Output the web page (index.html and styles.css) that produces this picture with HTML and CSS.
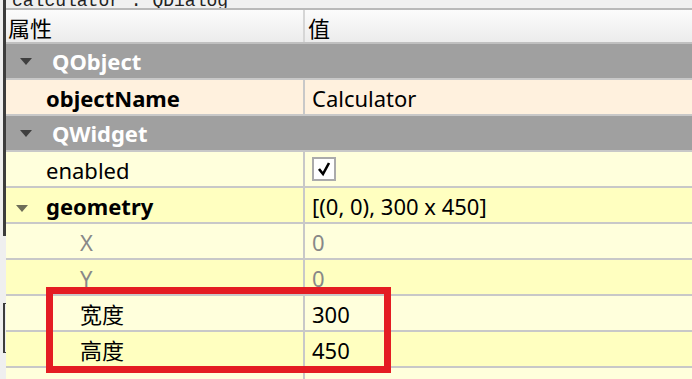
FILE: index.html
```html
<!DOCTYPE html>
<html lang="zh">
<head>
    <meta charset="UTF-8">
    <title>Property Editor</title>
    <link rel="stylesheet" href="styles.css">
</head>
<body>

<div class="window">
    <div class="side">
        <div class="side-line"></div>
        <div class="side-box"></div>
    </div>

    <div class="main">
        <div class="caption"><span>calculator : QDialog</span></div>

        <div class="tree">
            <div class="row head">
                <div class="name">属性</div>
                <div class="value">值</div>
            </div>

            <div class="row group">
                <span class="arrow"></span>QObject
            </div>
            <div class="row prop orange">
                <div class="name bold">objectName</div>
                <div class="value">Calculator</div>
            </div>

            <div class="row group">
                <span class="arrow"></span>QWidget
            </div>
            <div class="row prop light">
                <div class="name">enabled</div>
                <div class="value">
                    <span class="check">
                        <svg width="18" height="18" viewBox="0 0 18 18">
                            <polyline points="4,9 8,14 14,3" fill="none" stroke="#000" stroke-width="2.6"/>
                        </svg>
                    </span>
                </div>
            </div>
            <div class="row prop yellow">
                <div class="name bold"><span class="arrow open"></span>geometry</div>
                <div class="value">[(0, 0), 300 x 450]</div>
            </div>
            <div class="row prop light">
                <div class="name child muted">X</div>
                <div class="value muted">0</div>
            </div>
            <div class="row prop yellow">
                <div class="name child muted">Y</div>
                <div class="value muted">0</div>
            </div>
            <div class="row prop light">
                <div class="name child">宽度</div>
                <div class="value">300</div>
            </div>
            <div class="row prop yellow">
                <div class="name child">高度</div>
                <div class="value">450</div>
            </div>
            <div class="row prop light">
                <div class="name bold">sizePolicy</div>
                <div class="value">[Preferred, Preferred, 0, 0]</div>
            </div>
        </div>
    </div>

    <!-- red annotation box drawn over the width / height rows -->
    <div class="mark"></div>
</div>

</body>
</html>
```

FILE: styles.css
```css
body {
    margin: 0;
    padding: 0;
    overflow: hidden;
    background-color: #f0f0f0;
    font-family: "Noto Sans", "Noto Sans CJK SC", sans-serif;
    font-size: 22px;
    color: #000;
}

.window {
    position: relative;
    display: flex;
    width: 692px;
    height: 379px;
    overflow: hidden;
}

/* strip of the neighbouring widget on the left */
.side {
    width: 6px;
    flex-shrink: 0;
    display: flex;
    flex-direction: column;
    background-color: #efefef;
}

.side-line {
    height: 236px;
    flex-shrink: 0;
    margin-left: 3px;
    border-left: 3px solid #3c3c3c;
}

.side-box {
    height: 48px;
    flex-shrink: 0;
    margin-top: 67px;
    margin-left: 3px;
    border-top: 1px solid #3c3c3c;
    border-bottom: 1px solid #3c3c3c;
    border-left: 2px solid #3c3c3c;
}

.main {
    flex: 1;
    display: flex;
    flex-direction: column;
}

.caption {
    height: 8px;
    flex-shrink: 0;
    overflow: hidden;
    border-bottom: 2px solid #b9b9b9;
    background-color: #f0f0f0;
}

.caption span {
    display: block;
    margin: -8px 0 0 6px;
    font-family: "Liberation Mono", monospace;
    font-size: 18px;
    line-height: 18px;
    color: #222;
}

.tree {
    flex-shrink: 0;
}

.row {
    display: flex;
    height: 34px;
    line-height: 36px;
    border-bottom: 2px solid #c8c8c8;
    white-space: nowrap;
}

.name {
    width: 257px;
    flex-shrink: 0;
    padding-left: 40px;
    border-right: 2px solid #c8c8c8;
}

.value {
    flex: 1;
    padding-left: 7px;
}

.head {
    height: 32px;
    background: linear-gradient(#fcfcfc, #ececec);
    border-bottom-color: #c0c0c0;
}

.head .name {
    padding-left: 2px;
    width: 295px;
    border-right-color: #d6d6d6;
}

.head .value {
    padding-left: 3px;
}

.group {
    background-color: #a0a0a0;
    color: #fff;
    font-weight: bold;
    padding-left: 14px;
    align-items: center;
}

.group .arrow {
    margin-right: 20px;
}

.arrow {
    display: inline-block;
    width: 0;
    height: 0;
    border-left: 6px solid transparent;
    border-right: 6px solid transparent;
    border-top: 7px solid #3f3f3f;
}

.arrow.open {
    border-top-color: #6e6e58;
    margin-left: -30px;
    margin-right: 18px;
    vertical-align: 3px;
}

.orange { background-color: #fff1de; }
.light { background-color: #ffffdc; }
.yellow { background-color: #ffffc0; }

.bold { font-weight: bold; }

.child { padding-left: 74px; width: 223px; }

.muted { color: #888; }

.check {
    display: inline-flex;
    align-items: center;
    justify-content: center;
    width: 20px;
    height: 20px;
    margin-top: 5px;
    vertical-align: top;
    background-color: #fff;
    border: 2px solid #ababab;
}

.mark {
    position: absolute;
    left: 46px;
    top: 287px;
    width: 345px;
    height: 86px;
    box-sizing: border-box;
    border: 7px solid #e41c22;
}
```
